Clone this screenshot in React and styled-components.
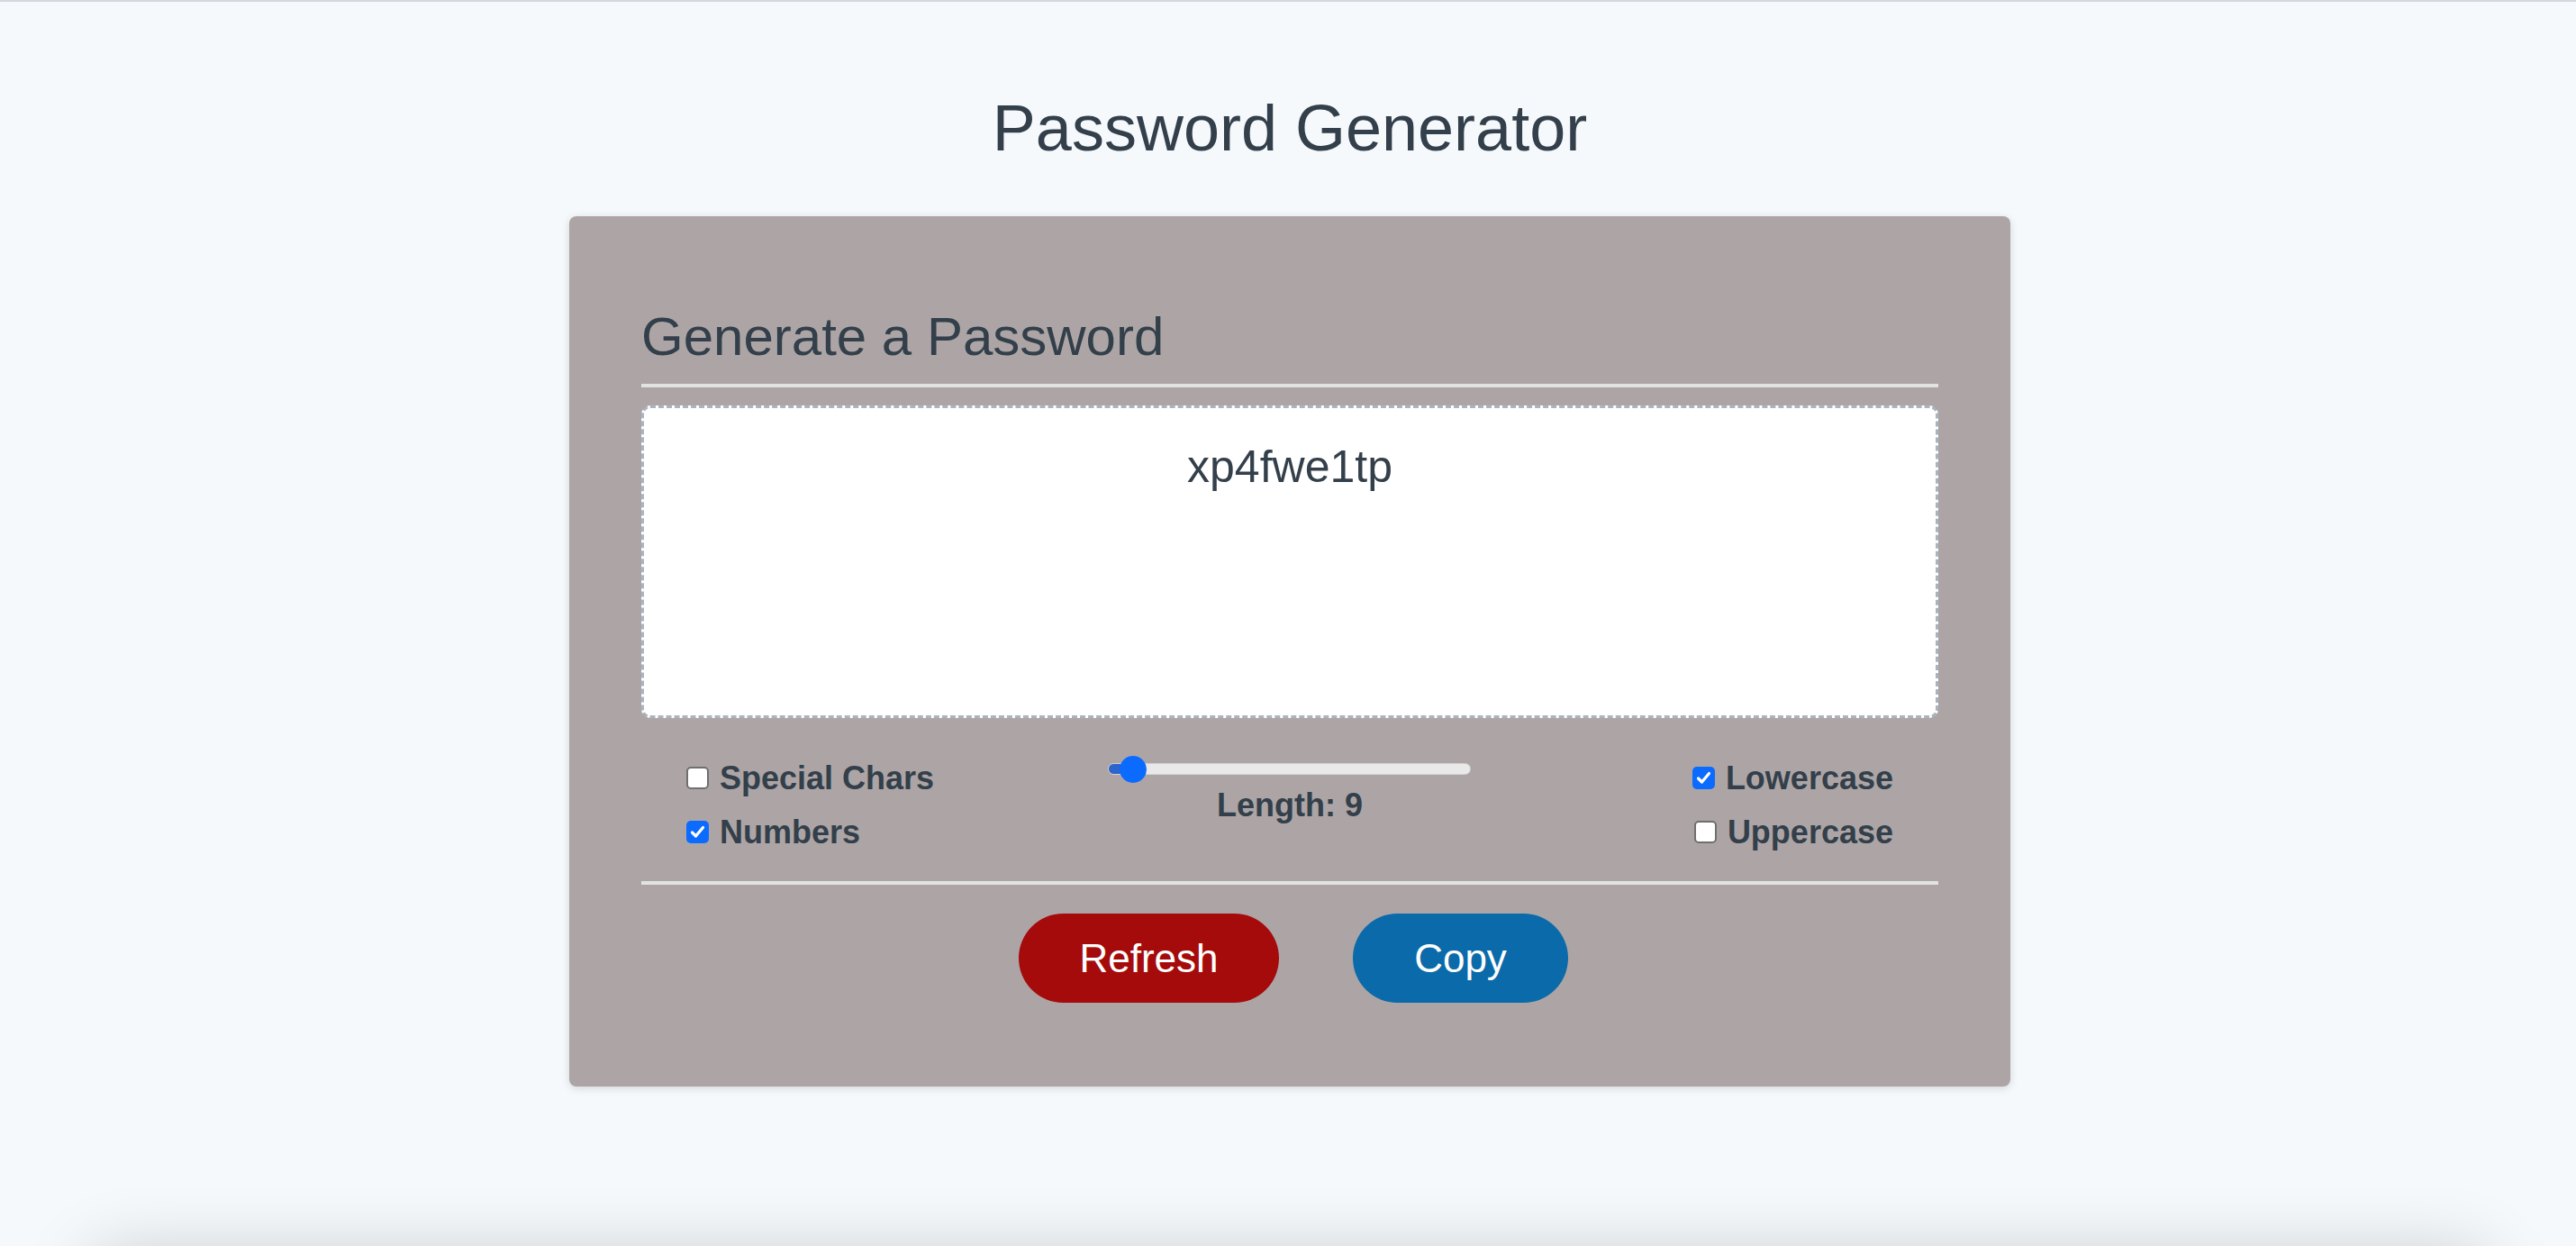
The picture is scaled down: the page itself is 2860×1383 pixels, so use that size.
import React, { useState } from "react";
import styled, { createGlobalStyle } from "styled-components";

const GlobalStyle = createGlobalStyle`
  body {
    margin: 0;
    background-color: #f5f9fc;
    font-family: "Liberation Sans", Arial, Helvetica, sans-serif;
    color: #333f4a;
  }
`;

const Page = styled.div`
  height: 100vh;
  box-sizing: border-box;
  overflow: hidden;
  border-top: 2px solid #d7d7df;
  padding: 99px 0 0 4px;
`;

const Title = styled.h1`
  margin: 0;
  font-size: 72px;
  font-weight: 400;
  line-height: normal;
  text-align: center;
`;

const Card = styled.div`
  width: 1600px;
  box-sizing: border-box;
  margin: 57px auto 0;
  padding: 99px 80px 93px;
  background-color: #ada5a5;
  border-radius: 8px;
  box-shadow: 0 2px 10px rgba(0, 0, 0, 0.14);
`;

const Heading = styled.h2`
  margin: 0;
  font-size: 60px;
  font-weight: 400;
  line-height: normal;
`;

const Divider = styled.div`
  height: 4px;
  margin-top: ${(p) => p.$top}px;
  background-color: #e2e2e2;
`;

const Output = styled.div`
  height: 347px;
  box-sizing: border-box;
  margin-top: 20px;
  padding-top: 36px;
  background-color: #fff;
  border: 3px dashed #aab4bf;
  border-radius: 10px;
  text-align: center;
  font-size: 50px;
  line-height: normal;
`;

const Options = styled.div`
  display: grid;
  grid-template-columns: 1fr 1fr 1fr;
  margin-top: 46px;
  padding: 0 50px;
`;

const Column = styled.div`
  display: flex;
  flex-direction: column;
  align-items: ${(p) => p.$align};
  gap: 19px;
`;

const Option = styled.label`
  display: flex;
  align-items: center;
  gap: 12px;
  font-size: 36px;
  font-weight: 700;
  line-height: 41px;
  cursor: pointer;
`;

const Box = styled.span`
  width: 25px;
  height: 25px;
  box-sizing: border-box;
  border-radius: 5px;
  display: flex;
  align-items: center;
  justify-content: center;
  background-color: ${(p) => (p.$checked ? "#0b6bff" : "#fff")};
  border: ${(p) => (p.$checked ? "none" : "2px solid #6f6f6f")};
`;

const Middle = styled.div`
  display: flex;
  flex-direction: column;
  align-items: center;
  margin-top: -4px;
`;

const Range = styled.input`
  appearance: none;
  -webkit-appearance: none;
  width: 403px;
  height: 13px;
  margin: 8px 0 0;
  border-radius: 7px;
  border: 1px solid #d2d2d2;
  box-sizing: border-box;
  outline: none;

  &::-webkit-slider-thumb {
    -webkit-appearance: none;
    appearance: none;
    width: 30px;
    height: 30px;
    border-radius: 50%;
    background-color: #0b6bff;
    border: none;
    cursor: pointer;
  }
`;

const LengthLabel = styled.div`
  margin-top: 13px;
  font-size: 36px;
  font-weight: 700;
  line-height: 41px;
`;

const Actions = styled.div`
  display: flex;
  justify-content: center;
  gap: 82px;
  margin-top: 32px;
  padding-left: 8px;
`;

const Button = styled.button`
  width: ${(p) => p.$width}px;
  height: 99px;
  padding: 0;
  border: none;
  border-radius: 50px;
  background-color: ${(p) => p.$bg};
  color: #fff;
  font-family: inherit;
  font-size: 44px;
  cursor: pointer;
`;

const Footer = styled.div`
  height: 200px;
  margin: 188px 100px 0;
  background-color: #f5f9fc;
  box-shadow: 0 0 80px rgba(0, 0, 0, 0.2);
`;

const Check = () => (
  <svg width="17" height="17" viewBox="0 0 17 17" fill="none">
    <path d="M2.5 9 L6.5 13 L14.5 3.5" stroke="#fff" strokeWidth="3.2" strokeLinecap="round" strokeLinejoin="round" />
  </svg>
);

const Checkbox = ({ label, checked, onToggle }) => (
  <Option onClick={onToggle}>
    <Box $checked={checked}>{checked && <Check />}</Box>
    {label}
  </Option>
);

const MIN = 8;
const MAX = 40;

export default function App() {
  const [opts, setOpts] = useState({
    special: false,
    numbers: true,
    lower: true,
    upper: false,
  });
  const [length, setLength] = useState(9);

  const toggle = (key) => setOpts((o) => ({ ...o, [key]: !o[key] }));
  const pct = ((length - MIN) / (MAX - MIN)) * 100;

  return (
    <>
      <GlobalStyle />
      <Page>
        <Title>Password Generator</Title>
        <Card>
          <Heading>Generate a Password</Heading>
          <Divider $top={18} />
          <Output>xp4fwe1tp</Output>
          <Options>
            <Column $align="flex-start">
              <Checkbox label="Special Chars" checked={opts.special} onToggle={() => toggle("special")} />
              <Checkbox label="Numbers" checked={opts.numbers} onToggle={() => toggle("numbers")} />
            </Column>
            <Middle>
              <Range
                type="range"
                min={MIN}
                max={MAX}
                value={length}
                onChange={(e) => setLength(+e.target.value)}
                style={{
                  background: `linear-gradient(to right, #2f64cc 0%, #2f64cc ${pct}%, #e9e9e9 ${pct}%, #e9e9e9 100%)`,
                }}
              />
              <LengthLabel>Length: {length}</LengthLabel>
            </Middle>
            <Column $align="flex-end">
              <Checkbox label="Lowercase" checked={opts.lower} onToggle={() => toggle("lower")} />
              <Checkbox label="Uppercase" checked={opts.upper} onToggle={() => toggle("upper")} />
            </Column>
          </Options>
          <Divider $top={34} />
          <Actions>
            <Button $bg="#a50b0b" $width={289}>Refresh</Button>
            <Button $bg="#0b6aa9" $width={239}>Copy</Button>
          </Actions>
        </Card>
        <Footer />
      </Page>
    </>
  );
}
